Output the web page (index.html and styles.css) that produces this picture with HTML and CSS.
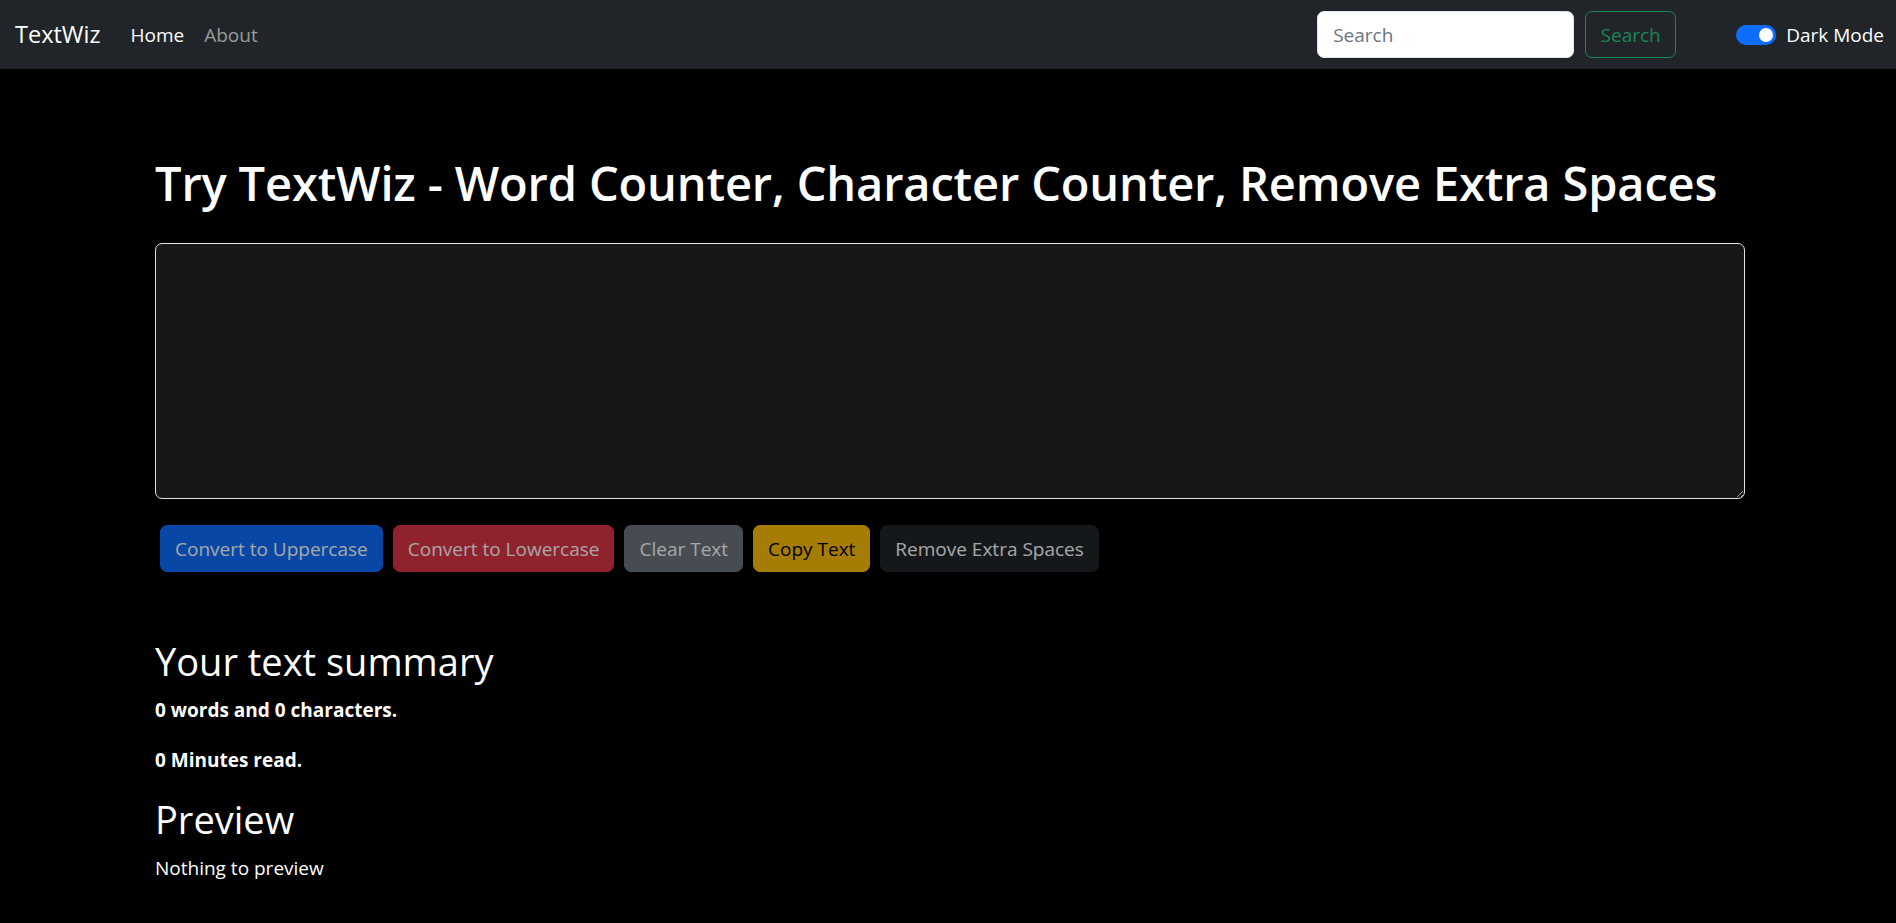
FILE: index.html
```html
<!DOCTYPE html>
<html lang="en">
<head>
<meta charset="utf-8">
<title>TextWiz</title>
<link rel="stylesheet" href="styles.css">
</head>
<body>
<nav class="navbar">
  <div class="nav-left">
    <a class="brand" href="#">TextWiz</a>
    <ul class="nav-links">
      <li><a class="nav-link active" href="#">Home</a></li>
      <li><a class="nav-link" href="#">About</a></li>
    </ul>
  </div>
  <div class="nav-right">
    <form class="search-form">
      <input class="search-input" type="search" placeholder="Search">
      <button class="btn-search" type="button">Search</button>
    </form>
    <div class="switch">
      <span class="switch-track"><span class="switch-knob"></span></span>
      <label class="switch-label">Dark Mode</label>
    </div>
  </div>
</nav>
<main class="container">
  <h1 class="title">Try TextWiz - Word Counter, Character Counter, Remove Extra Spaces</h1>
  <textarea class="text-box" rows="8"></textarea>
  <div class="actions">
    <button class="btn btn-primary" disabled>Convert to Uppercase</button>
    <button class="btn btn-danger" disabled>Convert to Lowercase</button>
    <button class="btn btn-secondary" disabled>Clear Text</button>
    <button class="btn btn-warning" disabled>Copy Text</button>
    <button class="btn btn-dark" disabled>Remove Extra Spaces</button>
  </div>
  <section class="summary">
    <h2 class="section-title">Your text summary</h2>
    <p class="stat">0 words and 0 characters.</p>
    <p class="stat">0 Minutes read.</p>
    <h2 class="section-title">Preview</h2>
    <p class="preview">Nothing to preview</p>
  </section>
</main>
</body>
</html>
```

FILE: styles.css
```css
* { box-sizing: border-box; }

body {
  margin: 0;
  background: #000;
  color: #fff;
  font-family: "Open Sans", "Noto Sans", sans-serif;
  font-size: 19px;
  line-height: 30px;
}

.navbar {
  display: flex;
  align-items: center;
  justify-content: space-between;
  height: 69px;
  padding: 0 12px 0 15px;
  background: #212529;
}

.nav-left { display: flex; align-items: center; }

.brand {
  font-size: 23.5px;
  line-height: 37px;
  padding: 6px 0;
  margin-right: 20px;
  color: #fff;
  text-decoration: none;
}

.nav-links {
  display: flex;
  list-style: none;
  margin: 0;
  padding: 0;
}

.nav-link {
  display: block;
  padding: 10px;
  color: rgba(255, 255, 255, 0.55);
  text-decoration: none;
}

.nav-link.active { color: #fff; }

.nav-right { display: flex; align-items: center; }

.search-form { display: flex; align-items: center; }

.search-input {
  width: 257px;
  height: 47px;
  padding: 7px 15px;
  margin-right: 11px;
  border: 1px solid #dee2e6;
  border-radius: 7px;
  background: #fff;
  font-family: inherit;
  font-size: 19px;
  color: #212529;
}

.search-input::placeholder { color: #6c757d; }

.btn-search {
  width: 91px;
  height: 47px;
  padding: 7px 0;
  border: 1px solid #198754;
  border-radius: 7px;
  background: transparent;
  color: #198754;
  font-family: inherit;
  font-size: 19px;
  line-height: 30px;
}

.switch {
  display: flex;
  align-items: center;
  margin-left: 60px;
}

.switch-track {
  display: flex;
  justify-content: flex-end;
  align-items: center;
  width: 40px;
  height: 20px;
  padding: 0 3px;
  border-radius: 10px;
  background: #0d6efd;
}

.switch-knob {
  width: 14px;
  height: 14px;
  border-radius: 50%;
  background: #fff;
}

.switch-label {
  margin-left: 10px;
  color: #fff;
}

.container {
  width: 1590px;
  margin-left: 155px;
}

.title {
  margin: 84px 0 30px;
  font-size: 47px;
  line-height: 60px;
  font-weight: 600;
  letter-spacing: -0.15px;
  white-space: nowrap;
}

.text-box {
  display: block;
  width: 1590px;
  height: 256px;
  margin: 0;
  padding: 7px 15px;
  background: #161818;
  color: #fff;
  border: 1px solid #dee2e6;
  border-radius: 7px;
  font-family: inherit;
  font-size: 19px;
}

.actions {
  display: flex;
  flex-wrap: wrap;
  gap: 10px;
  padding: 26px 5px 0;
}

.btn {
  height: 47px;
  padding: 7px 14px;
  border: 1px solid transparent;
  border-radius: 7px;
  font-family: inherit;
  font-size: 19px;
  line-height: 30px;
  color: #fff;
  opacity: 0.65;
}

.btn-primary { background: #0d6efd; border-color: #0d6efd; }
.btn-danger { background: #dc3545; border-color: #dc3545; }
.btn-secondary { background: #6c757d; border-color: #6c757d; }
.btn-warning { background: #ffc107; border-color: #ffc107; color: #000; }
.btn-dark { background: #212529; border-color: #212529; }

.summary { padding-top: 65px; }

.section-title {
  margin: 0 0 10px;
  font-size: 38px;
  line-height: 48px;
  font-weight: 400;
}

.stat, .preview { margin: 0 0 20px; }

.stat { font-weight: 700; }
```
